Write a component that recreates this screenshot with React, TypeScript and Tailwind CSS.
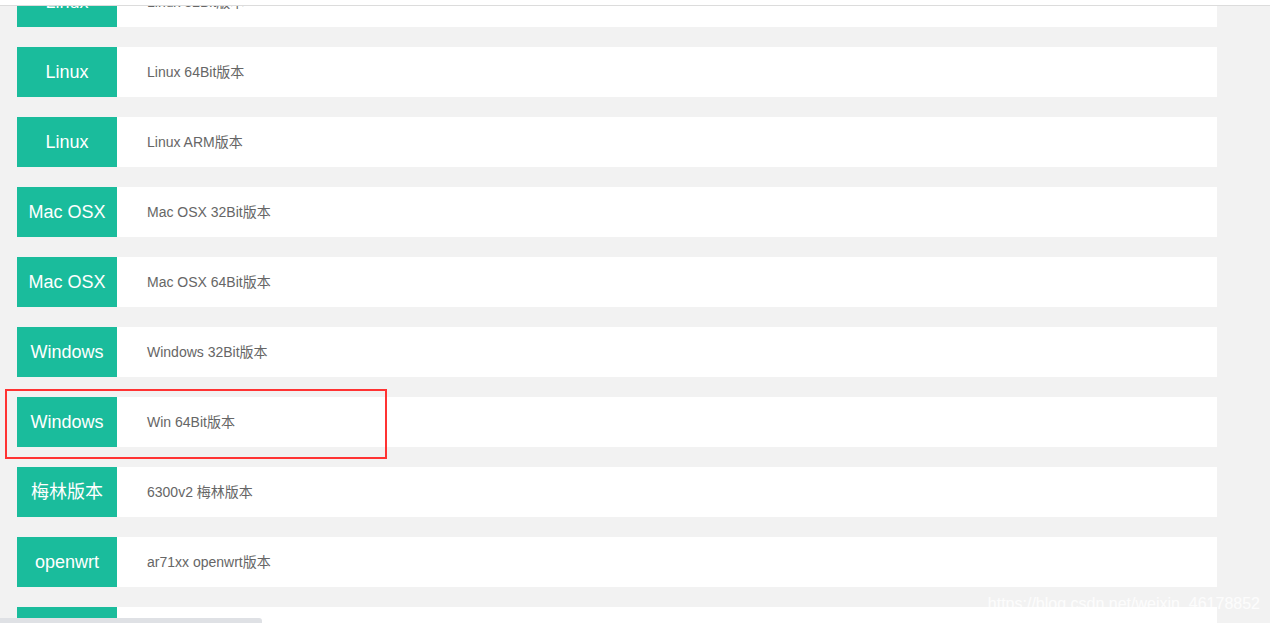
import React from "react";

const rows: [string, string][] = [
  ["Linux", "Linux 32Bit版本"],
  ["Linux", "Linux 64Bit版本"],
  ["Linux", "Linux ARM版本"],
  ["Mac OSX", "Mac OSX 32Bit版本"],
  ["Mac OSX", "Mac OSX 64Bit版本"],
  ["Windows", "Windows 32Bit版本"],
  ["Windows", "Win 64Bit版本"],
  ["梅林版本", "6300v2 梅林版本"],
  ["openwrt", "ar71xx openwrt版本"],
  ["Linux", "Linux MIPS版本"],
];

export default function App() {
  return (
    <div
      className="relative w-[1270px] h-[623px] overflow-hidden bg-white"
      style={{ fontFamily: '"Liberation Sans", Arial, "Noto Sans CJK SC", sans-serif' }}
    >
      <div className="h-[5px] bg-white" />
      <div className="h-px bg-[#dcdcdc]" />
      <div className="relative h-[617px] overflow-hidden bg-[#f2f2f2]">
        <div className="-mt-[29px] flex flex-col gap-5 pl-[17px] w-[1217px]">
          {rows.map(([t, d], i) => (
            <div key={i} className="flex h-[50px]">
              <div className="w-[100px] shrink-0 bg-[#1abc9c] text-white text-[18px] flex items-center justify-center">
                {t}
              </div>
              <div className="flex-1 bg-white flex items-center pl-[30px] text-[14px] text-[#666]">
                {d}
              </div>
            </div>
          ))}
        </div>
        <div className="absolute left-[5px] top-[383px] w-[382px] h-[70px] border-2 border-[#ff3333]" />
        <div className="absolute right-[10px] bottom-[10px] text-[16px] leading-[18px] text-white/80">
          https://blog.csdn.net/weixin_46178852
        </div>
        <div className="absolute left-0 bottom-0 w-[262px] h-[5px] bg-[#dfe1e5] rounded-tr-[3px]" />
      </div>
    </div>
  );
}
